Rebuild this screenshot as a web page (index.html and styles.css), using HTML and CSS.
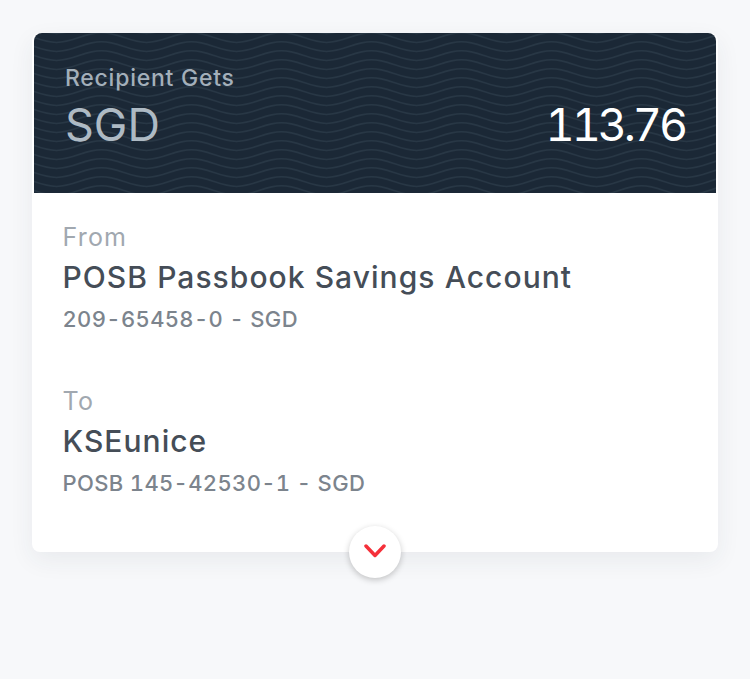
FILE: index.html
```html
<!DOCTYPE html>
<html lang="en">
<head>
  <meta charset="UTF-8" />
  <meta name="viewport" content="width=device-width, initial-scale=1" />
  <title>Transfer Review</title>
  <link rel="stylesheet" href="styles.css">
</head>
<body>

  <div class="card">
    <div class="summary">
      <div class="summary-label">Recipient Gets</div>
      <div class="summary-row">
        <span class="currency">SGD</span>
        <span class="amount">113.76</span>
      </div>
    </div>

    <div class="details">
      <div class="party">
        <div class="party-label">From</div>
        <div class="party-name">POSB Passbook Savings Account</div>
        <div class="party-account">209-65458-0 - SGD</div>
      </div>
      <div class="party">
        <div class="party-label">To</div>
        <div class="party-name">KSEunice</div>
        <div class="party-account">POSB 145-42530-1 - SGD</div>
      </div>
    </div>

    <button class="expand" type="button" aria-label="Show more">
      <svg width="24" height="14" viewBox="0 0 24 14">
        <path d="M3 2 L12 11.5 L21 2" fill="none" stroke="#f5303a" stroke-width="3.5" stroke-linecap="round" stroke-linejoin="round" />
      </svg>
    </button>
  </div>

</body>
</html>
```

FILE: styles.css
```css
* {
  box-sizing: border-box;
}
html, body {
  height: 679px;
}
body {
  font-family: Inter, "Liberation Sans", sans-serif;
  font-variant-numeric: tabular-nums;
  background: #f7f8fa;
  margin: 0;
  padding: 33px 32px 0;
}
.card {
  position: relative;
  height: 519px;
  background: white;
  border-radius: 8px;
  box-shadow: 0 8px 24px rgba(40,50,70,0.07);
}
.summary {
  height: 160px;
  margin: 0 2px;
  padding: 32px 31px 0;
  border-radius: 8px 8px 0 0;
  background-color: #1b2836;
  background-image: url("data:image/svg+xml,%3Csvg xmlns='http://www.w3.org/2000/svg' width='90' height='9'%3E%3Cg fill='none' stroke='%23283745' stroke-width='1.5'%3E%3Cpath d='M-45 -4.5 C-27 -11 -18 -11 0 -4.5 S27 2 45 -4.5 S72 -11 90 -4.5 S117 2 135 -4.5'/%3E%3Cpath d='M-45 4.5 C-27 -2 -18 -2 0 4.5 S27 11 45 4.5 S72 -2 90 4.5 S117 11 135 4.5'/%3E%3Cpath d='M-45 13.5 C-27 7 -18 7 0 13.5 S27 20 45 13.5 S72 7 90 13.5 S117 20 135 13.5'/%3E%3C/g%3E%3C/svg%3E");
}
.summary-label {
  font-size: 23px;
  line-height: 26px;
  font-weight: 500;
  letter-spacing: 0.75px;
  color: #a3afba;
}
.summary-row {
  display: flex;
  justify-content: space-between;
  align-items: center;
  margin-top: 7px;
  font-size: 45px;
  line-height: 54px;
}
.currency {
  color: #aebac4;
}
.amount {
  letter-spacing: -3.1px;
  color: white;
}
.details {
  padding: 28px 30.5px 0;
}
.party {
  margin-bottom: 52px;
}
.party-label {
  font-size: 25px;
  line-height: 32px;
  letter-spacing: 1.2px;
  color: #a1a8b0;
}
.party-name {
  margin-top: 6px;
  font-size: 30px;
  line-height: 36px;
  font-weight: 500;
  letter-spacing: 1.05px;
  color: #454d57;
}
.party-account {
  margin-top: 10px;
  font-size: 22px;
  line-height: 28px;
  font-weight: 500;
  letter-spacing: 0.35px;
  color: #7c848d;
}
.expand {
  position: absolute;
  left: 317px;
  bottom: -26px;
  width: 52px;
  height: 52px;
  padding: 0 0 2px;
  display: flex;
  align-items: center;
  justify-content: center;
  border: none;
  border-radius: 50%;
  background: white;
  box-shadow: 0 2px 6px rgba(0,0,0,0.22);
}
```
